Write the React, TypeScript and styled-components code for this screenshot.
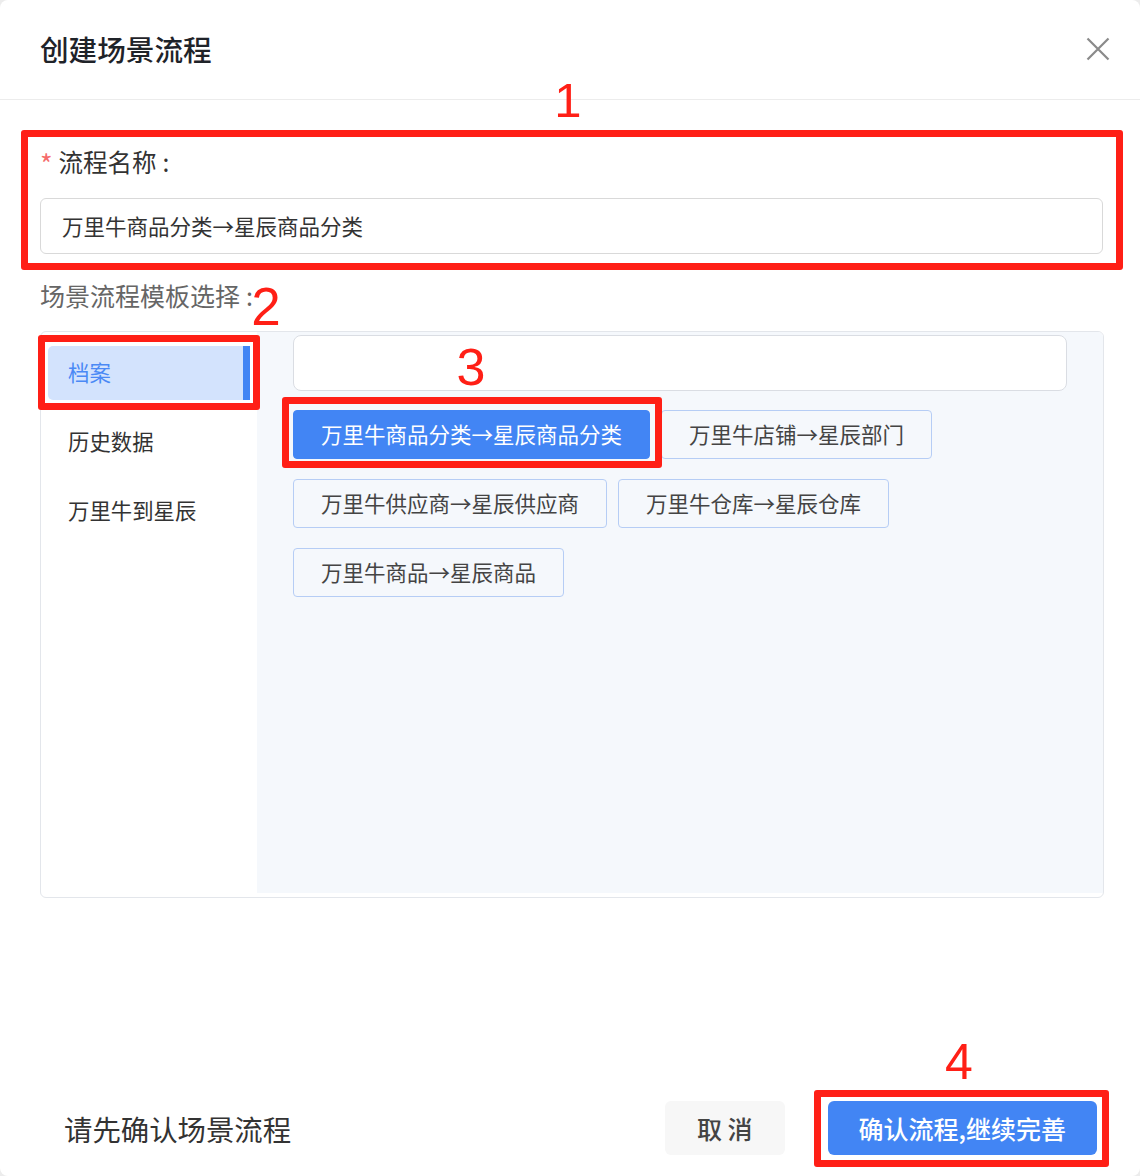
import { createGlobalStyle } from 'styled-components';
import styled from 'styled-components';

const GlobalStyle = createGlobalStyle`
  html, body {
    margin: 0;
    padding: 0;
    background: #ececec;
  }
  body {
    font-family: "Noto Sans CJK SC", "Noto Sans", sans-serif;
    color: #333;
  }
  * {
    box-sizing: border-box;
  }
`;

const Stage = styled.div`
  position: relative;
  width: 1140px;
  height: 1176px;
`;

const Dialog = styled.div`
  width: 1140px;
  height: 1176px;
  background: #fff;
  border-radius: 8px;
  display: flex;
  flex-flow: column nowrap;
`;

const Header = styled.header`
  flex: 0 0 100px;
  display: flex;
  align-items: center;
  justify-content: space-between;
  padding: 0 30px 2px 40px;
  border-bottom: 1px solid #ececec;
`;

const Title = styled.h1`
  margin: 0;
  font-size: 28.6px;
  font-weight: 500;
  color: #1f2329;
`;

const CloseButton = styled.button`
  width: 24px;
  height: 24px;
  padding: 0;
  border: 0;
  background: none;
  display: flex;
  align-items: center;
  justify-content: center;
  cursor: pointer;
`;

const Body = styled.div`
  flex: 1 1 auto;
  padding: 0 36px 0 40px;
  display: flex;
  flex-flow: column nowrap;
`;

const FieldLabel = styled.label`
  display: flex;
  align-items: center;
  margin-top: 43px;
  height: 36px;
  font-size: 24.5px;
  color: #333;
`;

const Required = styled.span`
  color: #f56c6c;
  font-size: 27px;
  margin-right: 6px;
  position: relative;
  top: 2px;
`;

const Colon = styled.span`
  margin-left: 6px;
`;

const TextInput = styled.div`
  margin-top: 19px;
  width: 1063px;
  height: 56px;
  border: 1px solid #d9d9d9;
  border-radius: 6px;
  padding: 0 21px 2px;
  display: flex;
  align-items: center;
  font-size: 21.5px;
  color: #333;
  background: #fff;
`;

const SectionLabel = styled.div`
  margin-top: 23px;
  height: 36px;
  display: flex;
  align-items: center;
  font-size: 25px;
  color: #666;
`;

const Panel = styled.div`
  margin-top: 18px;
  width: 1064px;
  height: 567px;
  border: 1px solid #e3e6eb;
  border-radius: 6px;
  display: grid;
  grid-template-columns: 216px 1fr;
  align-items: start;
  overflow: hidden;
`;

const CategoryList = styled.nav`
  display: flex;
  flex-flow: column nowrap;
  gap: 15px;
  padding: 14px 7px 0;
`;

const CategoryItem = styled.div<{ $active?: boolean }>`
  height: 54px;
  display: flex;
  align-items: center;
  padding: 0 0 4px 20px;
  font-size: 21.4px;
  color: ${(p) => (p.$active ? '#4a89f5' : '#333')};
  background: ${(p) => (p.$active ? '#d3e3fd' : 'transparent')};
  border-radius: 5px 0 0 5px;
  border-right: 7px solid ${(p) => (p.$active ? '#4285f4' : 'transparent')};
`;

const TemplatePane = styled.div`
  height: 561px;
  background: #f5f8fc;
  padding: 3px 36px 0;
`;

const SearchBox = styled.div`
  height: 56px;
  background: #fff;
  border: 1px solid #dadde3;
  border-radius: 8px;
`;

const TemplateGrid = styled.div`
  margin-top: 19px;
  display: flex;
  flex-flow: row wrap;
  gap: 20px 11px;
`;

const TemplateButton = styled.button<{ $active?: boolean }>`
  height: 49px;
  padding: 0 27px 2px;
  border: 1px solid ${(p) => (p.$active ? '#4285f4' : '#b6cdf5')};
  border-radius: 4px;
  background: ${(p) => (p.$active ? '#4285f4' : 'transparent')};
  color: ${(p) => (p.$active ? '#fff' : '#444')};
  font-family: "Noto Sans CJK SC", "Noto Sans", sans-serif;
  font-size: 21.5px;
  cursor: pointer;
`;

const Footer = styled.footer`
  flex: 0 0 auto;
  display: flex;
  align-items: center;
  padding: 0 43px 21px 64px;
`;

const Hint = styled.div`
  flex: 1 1 auto;
  font-size: 28.4px;
  color: #333;
`;

const FooterButton = styled.button<{ $primary?: boolean }>`
  height: 54px;
  border: 0;
  border-radius: 6px;
  padding: 0 ${(p) => (p.$primary ? '31px' : '32px')};
  margin-left: ${(p) => (p.$primary ? '43px' : '0')};
  background: ${(p) => (p.$primary ? '#4285f4' : '#f7f7f7')};
  color: ${(p) => (p.$primary ? '#fff' : '#444')};
  font-family: "Noto Sans CJK SC", "Noto Sans", sans-serif;
  font-size: 25px;
  font-weight: 500;
  cursor: pointer;
`;

// screenshot annotations drawn over the dialog
const RedBox = styled.div<{ $x: number; $y: number; $w: number; $h: number }>`
  position: absolute;
  left: ${(p) => p.$x}px;
  top: ${(p) => p.$y}px;
  width: ${(p) => p.$w}px;
  height: ${(p) => p.$h}px;
  border: 7px solid #ff1f16;
  border-radius: 3px;
  pointer-events: none;
`;

const Mark = styled.div<{ $x: number; $y: number; $size: number }>`
  position: absolute;
  left: ${(p) => p.$x}px;
  top: ${(p) => p.$y - p.$size * 0.13}px;
  transform: translateX(-50%);
  font-family: "Liberation Sans", Arial, sans-serif;
  font-size: ${(p) => p.$size}px;
  line-height: 1;
  color: #ff1f16;
  pointer-events: none;
`;

const categories = ['档案', '历史数据', '万里牛到星辰'];

const templates = [
  '万里牛商品分类→星辰商品分类',
  '万里牛店铺→星辰部门',
  '万里牛供应商→星辰供应商',
  '万里牛仓库→星辰仓库',
  '万里牛商品→星辰商品',
];

const App = () => {
  return (
    <>
      <GlobalStyle />
      <Stage>
        <Dialog>
          <Header>
            <Title>创建场景流程</Title>
            <CloseButton aria-label="close">
              <svg width="24" height="24" viewBox="0 0 24 24">
                <path d="M1.5 1.5 L22.5 22.5 M22.5 1.5 L1.5 22.5" stroke="#8a8a8a" strokeWidth="2.2" fill="none" />
              </svg>
            </CloseButton>
          </Header>
          <Body>
            <FieldLabel>
              <Required>*</Required>流程名称<Colon>:</Colon>
            </FieldLabel>
            <TextInput>万里牛商品分类→星辰商品分类</TextInput>
            <SectionLabel>
              场景流程模板选择<Colon>:</Colon>
            </SectionLabel>
            <Panel>
              <CategoryList>
                {categories.map((c, i) => (
                  <CategoryItem key={c} $active={i === 0}>
                    {c}
                  </CategoryItem>
                ))}
              </CategoryList>
              <TemplatePane>
                <SearchBox />
                <TemplateGrid>
                  {templates.map((t, i) => (
                    <TemplateButton key={t} $active={i === 0}>
                      {t}
                    </TemplateButton>
                  ))}
                </TemplateGrid>
              </TemplatePane>
            </Panel>
          </Body>
          <Footer>
            <Hint>请先确认场景流程</Hint>
            <FooterButton>取 消</FooterButton>
            <FooterButton $primary>确认流程,继续完善</FooterButton>
          </Footer>
        </Dialog>

        <RedBox $x={21} $y={130} $w={1102} $h={140} />
        <RedBox $x={38} $y={335} $w={222} $h={75} />
        <RedBox $x={282} $y={397} $w={380} $h={71} />
        <RedBox $x={814} $y={1090} $w={295} $h={77} />
        <Mark $x={568} $y={82} $size={49}>1</Mark>
        <Mark $x={266} $y={287} $size={53}>2</Mark>
        <Mark $x={471} $y={348} $size={52}>3</Mark>
        <Mark $x={959} $y={1043} $size={50}>4</Mark>
      </Stage>
    </>
  );
};

export default App;
